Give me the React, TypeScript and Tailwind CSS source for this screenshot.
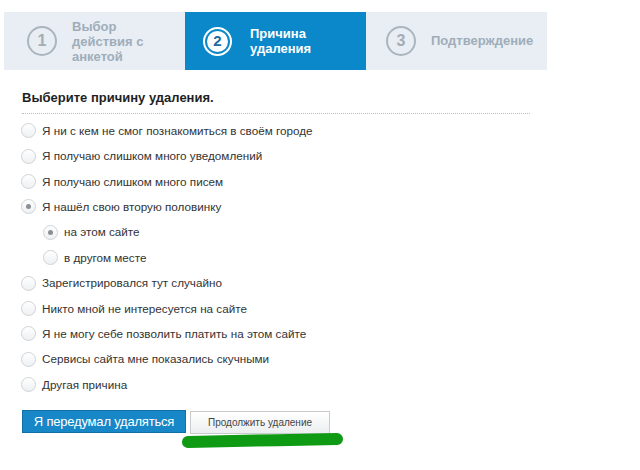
import React from "react";

const reasons = [
  { label: "Я ни с кем не смог познакомиться в своём городе" },
  { label: "Я получаю слишком много уведомлений" },
  { label: "Я получаю слишком много писем" },
  { label: "Я нашёл свою вторую половинку", checked: true },
  { label: "на этом сайте", checked: true, sub: true },
  { label: "в другом месте", sub: true },
  { label: "Зарегистрировался тут случайно" },
  { label: "Никто мной не интересуется на сайте" },
  { label: "Я не могу себе позволить платить на этом сайте" },
  { label: "Сервисы сайта мне показались скучными" },
  { label: "Другая причина" },
];

const Radio: React.FC<{ checked?: boolean }> = ({ checked }) => (
  <span className="w-[15px] h-[15px] shrink-0 rounded-full border border-[#cfd3d6] bg-gradient-to-b from-[#ffffff] to-[#eef0f2] flex items-center justify-center">
    {checked && <span className="w-[5px] h-[5px] rounded-full bg-[#8a8f94]" />}
  </span>
);

const App: React.FC = () => {
  return (
    <div className="relative w-[640px] h-[470px] bg-white font-['Liberation_Sans',Arial,sans-serif] overflow-hidden">
      {/* Steps */}
      <div className="ml-[4px] pt-[12px] flex">
        <div className="w-[181px] h-[58px] bg-[#e8eef3] flex items-center pl-[23px] gap-[15px]">
          <span className="w-[30px] h-[30px] rounded-full border-2 border-[#abb5bd] flex items-center justify-center text-[16px] font-bold text-[#a3adb6]">
            1
          </span>
          <span className="text-[13px] leading-[15px] font-bold text-[#9fadba]">
            Выбор
            <br />
            действия с
            <br />
            анкетой
          </span>
        </div>
        <div className="w-[181px] h-[58px] bg-[#0a88c9] flex items-center pl-[18px] gap-[18px]">
          <span className="w-[29px] h-[29px] rounded-full border-2 border-white p-[2px] flex">
            <span className="flex-1 rounded-full bg-white flex items-center justify-center text-[15px] font-bold text-[#1b6aa0]">
              2
            </span>
          </span>
          <span className="text-[13px] leading-[15px] font-bold text-white">
            Причина
            <br />
            удаления
          </span>
        </div>
        <div className="w-[181px] h-[58px] bg-[#e8eef3] flex items-center pl-[20px] gap-[15px]">
          <span className="w-[30px] h-[30px] rounded-full border-2 border-[#abb5bd] flex items-center justify-center text-[16px] font-bold text-[#a3adb6]">
            3
          </span>
          <span className="text-[13px] font-bold text-[#9fadba]">Подтверждение</span>
        </div>
      </div>

      {/* Form */}
      <div className="pl-[22px] pt-[20px]">
        <div className="w-[508px] border-b border-dotted border-[#b9bdc1] pb-[7px]">
          <h2 className="text-[13px] leading-[16px] font-bold text-[#1f1f1f]">
            Выберите причину удаления.
          </h2>
        </div>

        <ul className="mt-[4px] -ml-[1px]">
          {reasons.map((r, i) => (
            <li
              key={i}
              className={`h-[25.4px] flex items-center ${r.sub ? "pl-[22px] gap-[6px]" : "gap-[6px]"}`}
            >
              <Radio checked={r.checked} />
              <span className="text-[11.7px] text-[#333]">{r.label}</span>
            </li>
          ))}
        </ul>

        <div className="mt-[13px] flex items-start gap-[4px]">
          <button className="w-[164px] h-[23px] bg-[#1787c7] border border-[#116fa8] text-white text-[13px] tracking-[-0.2px]">
            Я передумал удаляться
          </button>
          <button className="w-[140px] h-[23px] mt-[1px] bg-gradient-to-b from-white to-[#eceeef] border border-[#c9ccce] text-[#444] text-[10px]">
            Продолжить удаление
          </button>
        </div>
      </div>

      {/* green marker */}
      <svg className="absolute left-[180px] top-[432px]" width="168" height="20" viewBox="0 0 168 20">
        <path d="M8 10 C 40 9, 110 8, 157 7" stroke="#0e9a12" strokeWidth="12" strokeLinecap="round" fill="none" />
      </svg>
    </div>
  );
};

export default App;
